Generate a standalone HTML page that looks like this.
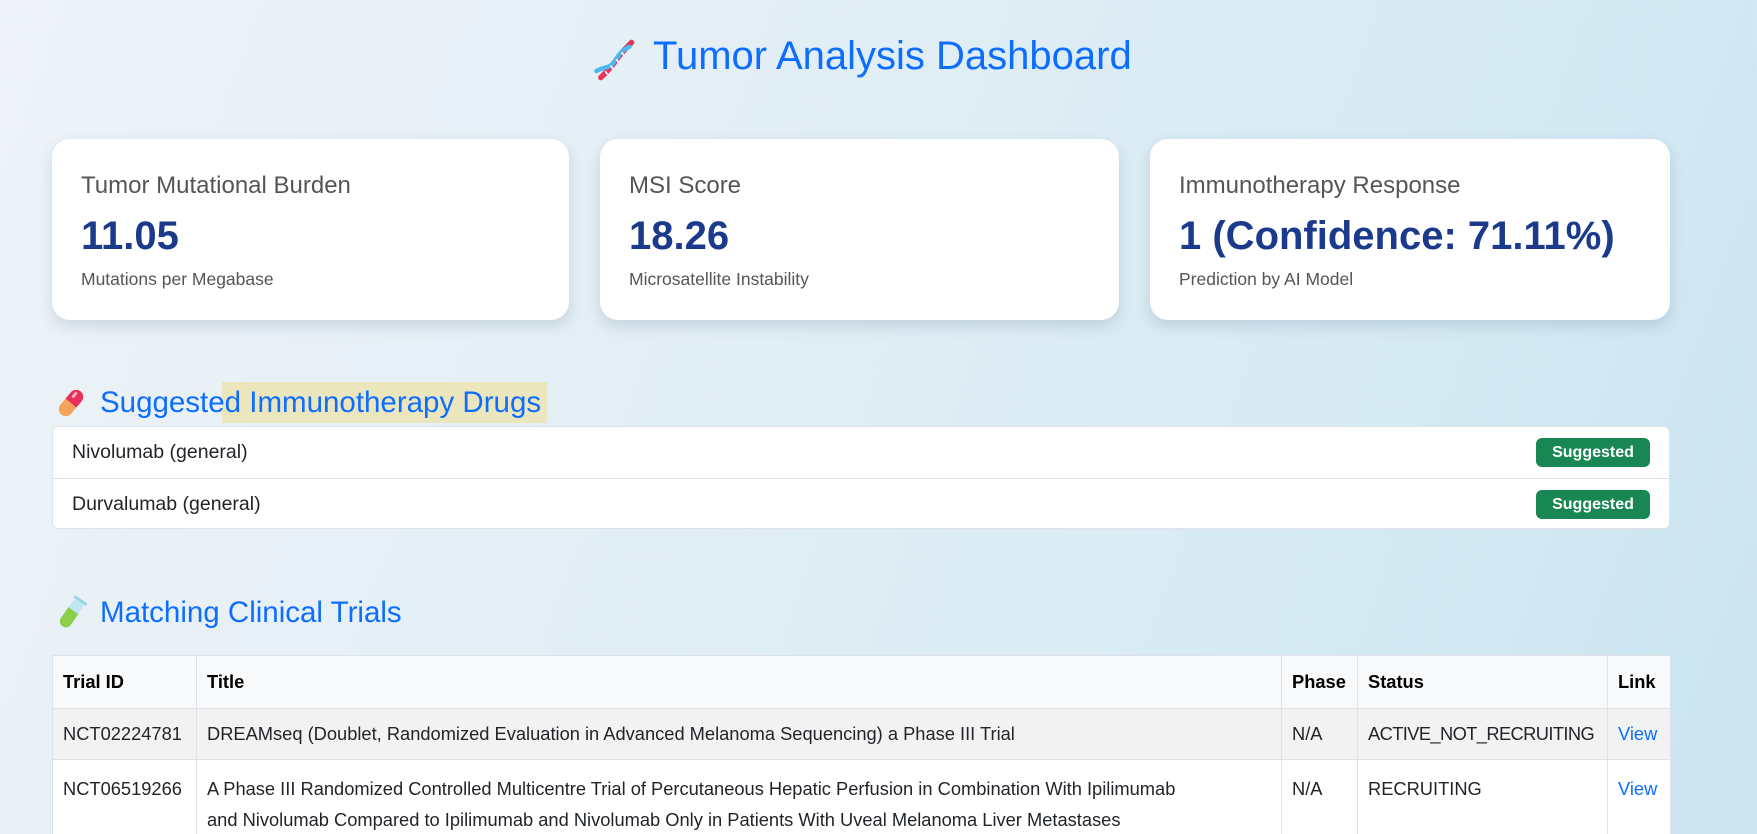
<!DOCTYPE html>
<html><head><meta charset="utf-8"><style>
*{box-sizing:border-box;margin:0;padding:0}
html{width:1757px;height:834px;overflow:hidden;background:linear-gradient(110deg,#eef3f7 0%,#e2eef5 40%,#d4e9f3 80%,#c9e3ef 100%)}
body{width:1757px;height:834px;overflow:hidden;font-family:"Liberation Sans",sans-serif;background:transparent;position:relative}
.abs{position:absolute}
h1{position:absolute;left:653px;top:31px;font-size:40px;font-weight:normal;color:#0d6efd;line-height:50px;white-space:nowrap}
.card{position:absolute;top:139px;height:181px;background:#fff;border-radius:18px;box-shadow:0 6px 14px rgba(60,90,120,.18)}
.card .l{position:absolute;left:29px;top:33px;font-size:24px;color:#555;white-space:nowrap}
.card .v{position:absolute;left:29px;top:75px;font-size:40px;font-weight:bold;color:#1b3a8c;white-space:nowrap}
.card .s{position:absolute;left:29px;top:130px;font-size:17.5px;color:#555;white-space:nowrap}
h2{position:absolute;left:100px;font-size:29.5px;font-weight:normal;color:#0d6efd;line-height:40px;white-space:nowrap}
.list{position:absolute;left:52px;top:426px;width:1618px;height:103px;background:#fff;border:1px solid #dfe2e6;border-radius:6px}
.row{height:51px;position:relative;font-size:19.5px;color:#212529;padding-left:19px;line-height:51px}
.row+.row{border-top:1px solid #dfe2e6}
.badge{position:absolute;right:19px;top:11px;width:114px;height:29px;background:#198754;color:#fff;font-weight:bold;font-size:16px;line-height:29px;text-align:center;border-radius:6px}
table{position:absolute;left:52px;top:655px;width:1618px;table-layout:fixed;border-collapse:collapse;font-size:18.3px;color:#212529;background:#fff}
td,th{border:1px solid #dee2e6;padding:0 10px;text-align:left;vertical-align:top;white-space:nowrap}
th{background:#f8f9fa;height:52px;line-height:52px;font-weight:bold;color:#000}
tr.a td{background:#f2f2f2;height:50px;line-height:50px}
tr.b td{line-height:31px;padding-top:13px;height:90px}
.st{letter-spacing:-0.6px}
a{color:#0d6efd}
</style></head><body>
<svg class="abs" style="left:592px;top:38px" width="44" height="44" viewBox="0 0 40 40">
<path d="M8 36 C14 30 18 26 22 20 C26 14 30 10 36 4" stroke="#e8365d" stroke-width="5" fill="none" stroke-linecap="round"/>
<path d="M4 30 C10 26 16 28 20 22 C24 16 28 10 34 8" stroke="#4cb8f0" stroke-width="4" fill="none" stroke-linecap="round"/>
<g stroke="#fff" stroke-width="1.5"><line x1="12" y1="30" x2="14" y2="33"/><line x1="17" y1="25" x2="19" y2="28"/><line x1="22" y1="19" x2="24" y2="22"/><line x1="27" y1="13" x2="29" y2="16"/></g>
</svg>
<h1>Tumor Analysis Dashboard</h1>

<div class="card" style="left:52px;width:517px"><div class="l">Tumor Mutational Burden</div><div class="v">11.05</div><div class="s">Mutations per Megabase</div></div>
<div class="card" style="left:600px;width:519px"><div class="l">MSI Score</div><div class="v">18.26</div><div class="s">Microsatellite Instability</div></div>
<div class="card" style="left:1150px;width:520px"><div class="l">Immunotherapy Response</div><div class="v">1 (Confidence: 71.11%)</div><div class="s">Prediction by AI Model</div></div>

<div class="abs" style="left:222px;top:382px;width:325px;height:41px;background:#ece6bf"></div>
<svg class="abs" style="left:55px;top:386px" width="32" height="34" viewBox="0 0 32 34">
<g transform="rotate(40 16 17)"><rect x="9" y="2" width="14" height="30" rx="7" fill="#f5a35a"/><path d="M9 17 V9 a7 7 0 0 1 14 0 V17 Z" fill="#e8305f"/><rect x="12" y="5" width="3" height="7" rx="1.5" fill="#fff" opacity=".6"/></g>
</svg>
<h2 style="top:383px">Suggested Immunotherapy Drugs</h2>
<div class="list">
<div class="row">Nivolumab (general)<span class="badge">Suggested</span></div>
<div class="row">Durvalumab (general)<span class="badge">Suggested</span></div>
</div>

<svg class="abs" style="left:55px;top:596px" width="32" height="36" viewBox="0 0 32 36">
<g transform="rotate(35 16 18)"><rect x="10" y="1" width="12" height="32" rx="6" fill="#bfe6f2"/><path d="M10 14 H22 V27 a6 6 0 0 1 -12 0 Z" fill="#8ccf4a"/><rect x="8" y="0" width="16" height="3" rx="1.5" fill="#9dd4ea"/></g>
</svg>
<h2 style="top:593px">Matching Clinical Trials</h2>
<table>
<colgroup><col style="width:144px"><col style="width:1085px"><col style="width:76px"><col style="width:250px"><col style="width:63px"></colgroup>
<tr><th>Trial ID</th><th>Title</th><th>Phase</th><th>Status</th><th>Link</th></tr>
<tr class="a"><td>NCT02224781</td><td>DREAMseq (Doublet, Randomized Evaluation in Advanced Melanoma Sequencing) a Phase III Trial</td><td>N/A</td><td class="st">ACTIVE_NOT_RECRUITING</td><td><a>View</a></td></tr>
<tr class="b"><td>NCT06519266</td><td>A Phase III Randomized Controlled Multicentre Trial of Percutaneous Hepatic Perfusion in Combination With Ipilimumab<br>and Nivolumab Compared to Ipilimumab and Nivolumab Only in Patients With Uveal Melanoma Liver Metastases</td><td>N/A</td><td>RECRUITING</td><td><a>View</a></td></tr>
</table>
</body></html>
